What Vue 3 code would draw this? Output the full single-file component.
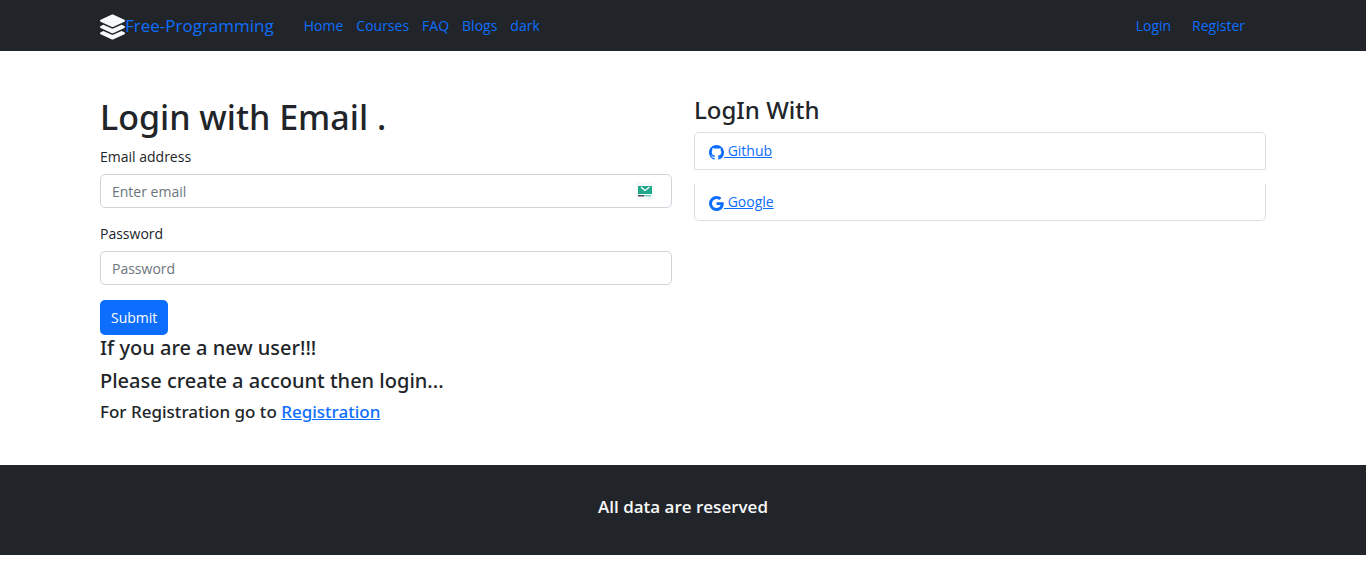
<script setup>
import { ref } from 'vue'

const links = ['Home', 'Courses', 'FAQ', 'Blogs', 'dark']
const email = ref('')
const password = ref('')
</script>

<template>
  <div class="page">
    <header class="navbar">
      <nav class="container nav-inner">
        <a class="brand" href="#">
          <svg class="brand-icon" viewBox="0 0 512 512" fill="currentColor" aria-hidden="true">
            <path d="M12.41 148.02l232.94 105.67c6.8 3.09 14.49 3.09 21.29 0l232.94-105.67c16.55-7.51 16.55-32.52 0-40.03L266.65 2.31a25.607 25.607 0 0 0-21.29 0L12.41 107.98c-16.55 7.51-16.55 32.53 0 40.04zm487.18 88.28l-58.09-26.33-161.64 73.27c-7.56 3.43-15.59 5.17-23.86 5.17s-16.29-1.74-23.86-5.17L70.51 209.97l-58.1 26.33c-16.55 7.5-16.55 32.5 0 40l232.94 105.59c6.8 3.08 14.49 3.08 21.29 0L499.59 276.3c16.55-7.5 16.55-32.5 0-40zm0 127.8l-57.87-26.23-161.86 73.37c-7.56 3.43-15.59 5.17-23.86 5.17s-16.29-1.74-23.86-5.17L70.29 337.87 12.41 364.1c-16.55 7.5-16.55 32.5 0 40l232.94 105.59c6.8 3.08 14.49 3.08 21.29 0L499.59 404.1c16.55-7.5 16.55-32.5 0-40z" />
          </svg>
          <span>Free-Programming</span>
        </a>
        <div class="nav-links">
          <a v-for="link in links" :key="link" href="#">{{ link }}</a>
        </div>
        <div class="nav-user">
          <a href="#">Login</a>
          <a href="#">Register</a>
        </div>
      </nav>
    </header>

    <main class="container content">
      <section>
        <h1>Login with Email .</h1>
        <form @submit.prevent>
          <div class="field">
            <label for="email">Email address</label>
            <div class="control">
              <input id="email" v-model="email" type="email" placeholder="Enter email" />
              <svg class="mail-badge" viewBox="0 0 18 18" aria-hidden="true">
                <rect width="18" height="18" fill="#f8f9fa" />
                <rect x="2" y="4" width="14" height="8" fill="#1fa88c" />
                <path d="M5 5l4 3.500 4.500-3.500" fill="none" stroke="#fff" stroke-width="1.300" />
                <rect x="2" y="13" width="6" height="1.500" fill="#4a4f58" />
                <rect x="8" y="13" width="7" height="1.500" fill="#7ccdbd" />
              </svg>
            </div>
          </div>
          <div class="field">
            <label for="password">Password</label>
            <div class="control">
              <input id="password" v-model="password" type="password" placeholder="Password" />
            </div>
          </div>
          <button type="submit">Submit</button>
        </form>
        <h4>If you are a new user!!!</h4>
        <h4>Please create a account then login...</h4>
        <h5>For Registration go to <a href="#">Registration</a></h5>
      </section>

      <section>
        <h3>LogIn With</h3>
        <ul class="providers">
          <li>
            <a href="#"><svg viewBox="0 0 16 16" fill="currentColor" aria-hidden="true">
              <path d="M8 0C3.580 0 0 3.580 0 8c0 3.540 2.290 6.530 5.470 7.590.4.070.55-.17.55-.38 0-.19-.01-.82-.01-1.490-2.010.37-2.530-.49-2.690-.94-.09-.23-.48-.94-.82-1.130-.28-.15-.68-.52-.01-.53.63-.01 1.080.58 1.230.82.72 1.210 1.870.87 2.330.66.07-.52.28-.87.51-1.070-1.780-.2-3.640-.89-3.640-3.950 0-.87.31-1.590.82-2.150-.08-.2-.36-1.020.08-2.120 0 0 .67-.21 2.200.82.64-.18 1.320-.27 2-.27s1.360.09 2 .27c1.530-1.040 2.200-.82 2.200-.82.44 1.100.16 1.920.08 2.120.51.56.82 1.270.82 2.150 0 3.070-1.870 3.750-3.650 3.950.29.25.54.73.54 1.480 0 1.070-.01 1.930-.01 2.200 0 .21.15.46.55.38A8.010 8.010 0 0 0 16 8c0-4.420-3.580-8-8-8z" />
            </svg> Github</a>
          </li>
          <li>
            <a href="#"><svg viewBox="0 0 16 16" fill="currentColor" aria-hidden="true">
              <path d="M15.545 6.558a9.420 9.420 0 0 1 .139 1.626c0 2.434-.87 4.492-2.384 5.885h.002C11.978 15.292 10.158 16 8 16A8 8 0 1 1 8 0a7.689 7.689 0 0 1 5.352 2.082l-2.284 2.284A4.347 4.347 0 0 0 8 3.166c-2.087 0-3.860 1.408-4.492 3.304a4.792 4.792 0 0 0 0 3.063h.003c.635 1.893 2.405 3.301 4.492 3.301 1.078 0 2.004-.276 2.722-.764h-.003a3.702 3.702 0 0 0 1.599-2.431H8v-3.080h7.545z" />
            </svg> Google</a>
          </li>
        </ul>
      </section>
    </main>

    <footer class="footer">
      <p>All data are reserved</p>
    </footer>
  </div>
</template>

<style>
body {
  margin: 0;
  background: #fff;
}
</style>

<style scoped>
.page,
.page * {
  box-sizing: border-box;
}

.page {
  font-family: "Segoe UI", "Open Sans", "Noto Sans", sans-serif;
  font-size: 14px;
  line-height: 22px;
  color: #212529;
}

a {
  color: #0d6efd;
}

.container {
  max-width: 1166px;
  margin: 0 auto;
}

.navbar {
  padding: 7px 0;
  background: #212529;
}

.nav-inner {
  display: flex;
  align-items: center;
  min-height: 37px;
}

.nav-inner a {
  text-decoration: none;
}

.brand {
  display: flex;
  align-items: center;
  margin-right: 30px;
  font-size: 17px;
}

.brand-icon {
  width: 25px;
  height: 26px;
  margin-top: 3px;
  color: #f8f9fa;
}

.nav-links {
  display: flex;
  flex: 1;
  gap: 13px;
}

.nav-user {
  display: flex;
  gap: 21px;
  padding-right: 21px;
}

.content {
  display: grid;
  grid-template-columns: 1fr 1fr;
  gap: 22px;
  padding: 44px 0 42px;
}

h1,
h3,
h4,
h5 {
  margin: 0 0 7px;
  font-family: "Segoe UI", "Noto Sans", "Open Sans", sans-serif;
  font-weight: 500;
}

h1 {
  font-size: 34px;
  line-height: 44px;
}

h3 {
  font-size: 24px;
  line-height: 30px;
}

h4 {
  font-size: 20px;
  line-height: 26px;
}

h5 {
  margin: 0;
  font-size: 17px;
  line-height: 22px;
}

.field {
  margin-bottom: 15px;
}

label {
  display: block;
  margin-bottom: 6px;
}

.control {
  position: relative;
}

input {
  display: block;
  width: 100%;
  height: 34px;
  padding: 5px 11px;
  border: 1px solid #ced4da;
  border-radius: 5px;
  background: #fff;
  color: #212529;
  font: inherit;
}

input::placeholder {
  color: #6c757d;
  opacity: 1;
}

.mail-badge {
  position: absolute;
  top: 8px;
  right: 18px;
  width: 18px;
  height: 18px;
}

button {
  display: block;
  height: 35px;
  padding: 0 11px;
  border: 0;
  border-radius: 5px;
  background: #0d6efd;
  color: #fff;
  font: inherit;
}

.providers {
  margin: 0;
  padding: 0;
  list-style: none;
}

.providers li {
  padding: 7px 14px;
  border: 1px solid #dfdfdf;
}

.providers li:first-child {
  margin-bottom: 14px;
  border-radius: 5px 5px 0 0;
}

.providers li:last-child {
  border-top: 0;
  border-radius: 0 0 5px 5px;
}

.providers svg {
  width: 15px;
  height: 15px;
  vertical-align: -4px;
}

.footer {
  padding: 31px 0 37px;
  background: #212529;
  color: #f8f9fa;
  text-align: center;
}

.footer p {
  margin: 0;
  font-size: 17px;
  font-weight: 600;
}
</style>
